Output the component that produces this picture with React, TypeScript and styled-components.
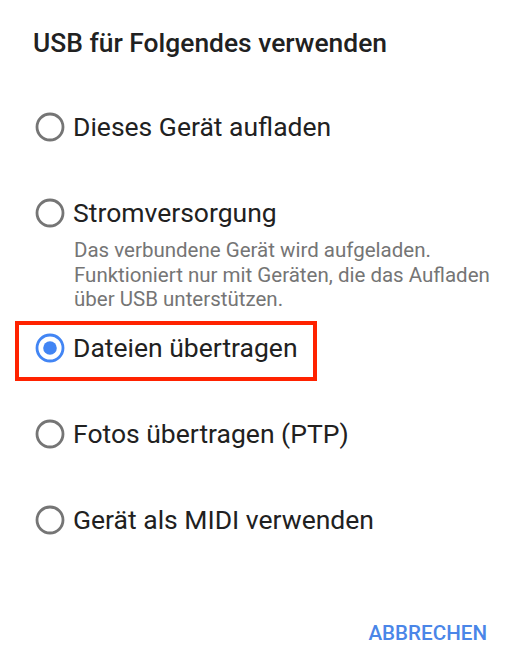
import React from "react";
import styled, { createGlobalStyle } from "styled-components";

const GlobalStyle = createGlobalStyle`
  html, body {
    margin: 0;
    padding: 0;
    background: #fff;
  }
  body {
    font-family: Roboto, "Noto Sans", "Liberation Sans", sans-serif;
    -webkit-font-smoothing: antialiased;
  }
`;

const Dialog = styled.div`
  width: 520px;
  height: 670px;
  box-sizing: border-box;
  padding: 28px 33px 0 33px;
  display: flex;
  flex-direction: column;
  background: #fff;
`;

const Title = styled.h1`
  margin: 0;
  font-size: 26.4px;
  line-height: 30px;
  font-weight: 500;
  color: #212121;
`;

const List = styled.div`
  display: flex;
  flex-direction: column;
  margin-top: 34px;
`;

const Item = styled.div<{ $summary?: boolean }>`
  display: flex;
  flex-direction: column;
  padding: 20px 0 ${({ $summary }) => ($summary ? "0" : "36px")} 2px;
`;

const Row = styled.div<{ $marked?: boolean }>`
  position: relative;
  display: inline-flex;
  align-self: flex-start;
  align-items: center;
  gap: 8px;
  height: 30px;

  ${({ $marked }) =>
    $marked &&
    `
    &::after {
      content: "";
      position: absolute;
      top: -12px;
      bottom: -18px;
      left: -20px;
      right: -19px;
      border: 4px solid #ff2200;
    }
  `}
`;

const Label = styled.span`
  font-size: 26.5px;
  line-height: 30px;
  color: #212121;
  white-space: nowrap;
`;

const Summary = styled.p`
  margin: 10px -20px 0 39px;
  padding-bottom: 1px;
  font-size: 20.5px;
  line-height: 24.5px;
  color: #757575;
  white-space: pre;
`;

const Footer = styled.div`
  display: flex;
  justify-content: flex-end;
  margin-top: 50px;
`;

const TextButton = styled.button`
  border: none;
  background: none;
  padding: 0;
  font-family: inherit;
  font-size: 20.6px;
  line-height: 24px;
  font-weight: 500;
  color: #4a86e8;
  cursor: pointer;
`;

function Radio({ checked }: { checked?: boolean }) {
  const color = checked ? "#4285f4" : "#757575";
  return (
    <svg width="30" height="30" viewBox="0 0 30 30">
      <circle cx="15" cy="15" r="13" fill="none" stroke={color} strokeWidth="2.8" />
      {checked && <circle cx="15" cy="15" r="6.8" fill={color} />}
    </svg>
  );
}

const options = [
  { label: "Dieses Gerät aufladen" },
  {
    label: "Stromversorgung",
    summary:
      "Das verbundene Gerät wird aufgeladen.\nFunktioniert nur mit Geräten, die das Aufladen\nüber USB unterstützen.",
  },
  { label: "Dateien übertragen", checked: true },
  { label: "Fotos übertragen (PTP)" },
  { label: "Gerät als MIDI verwenden" },
];

export default function App() {
  return (
    <>
      <GlobalStyle />
      <Dialog>
        <Title>USB für Folgendes verwenden</Title>
        <List>
          {options.map((o) => (
            <Item key={o.label} $summary={!!o.summary}>
              <Row $marked={o.checked}>
                <Radio checked={o.checked} />
                <Label>{o.label}</Label>
              </Row>
              {o.summary && <Summary>{o.summary}</Summary>}
            </Item>
          ))}
        </List>
        <Footer>
          <TextButton>ABBRECHEN</TextButton>
        </Footer>
      </Dialog>
    </>
  );
}
